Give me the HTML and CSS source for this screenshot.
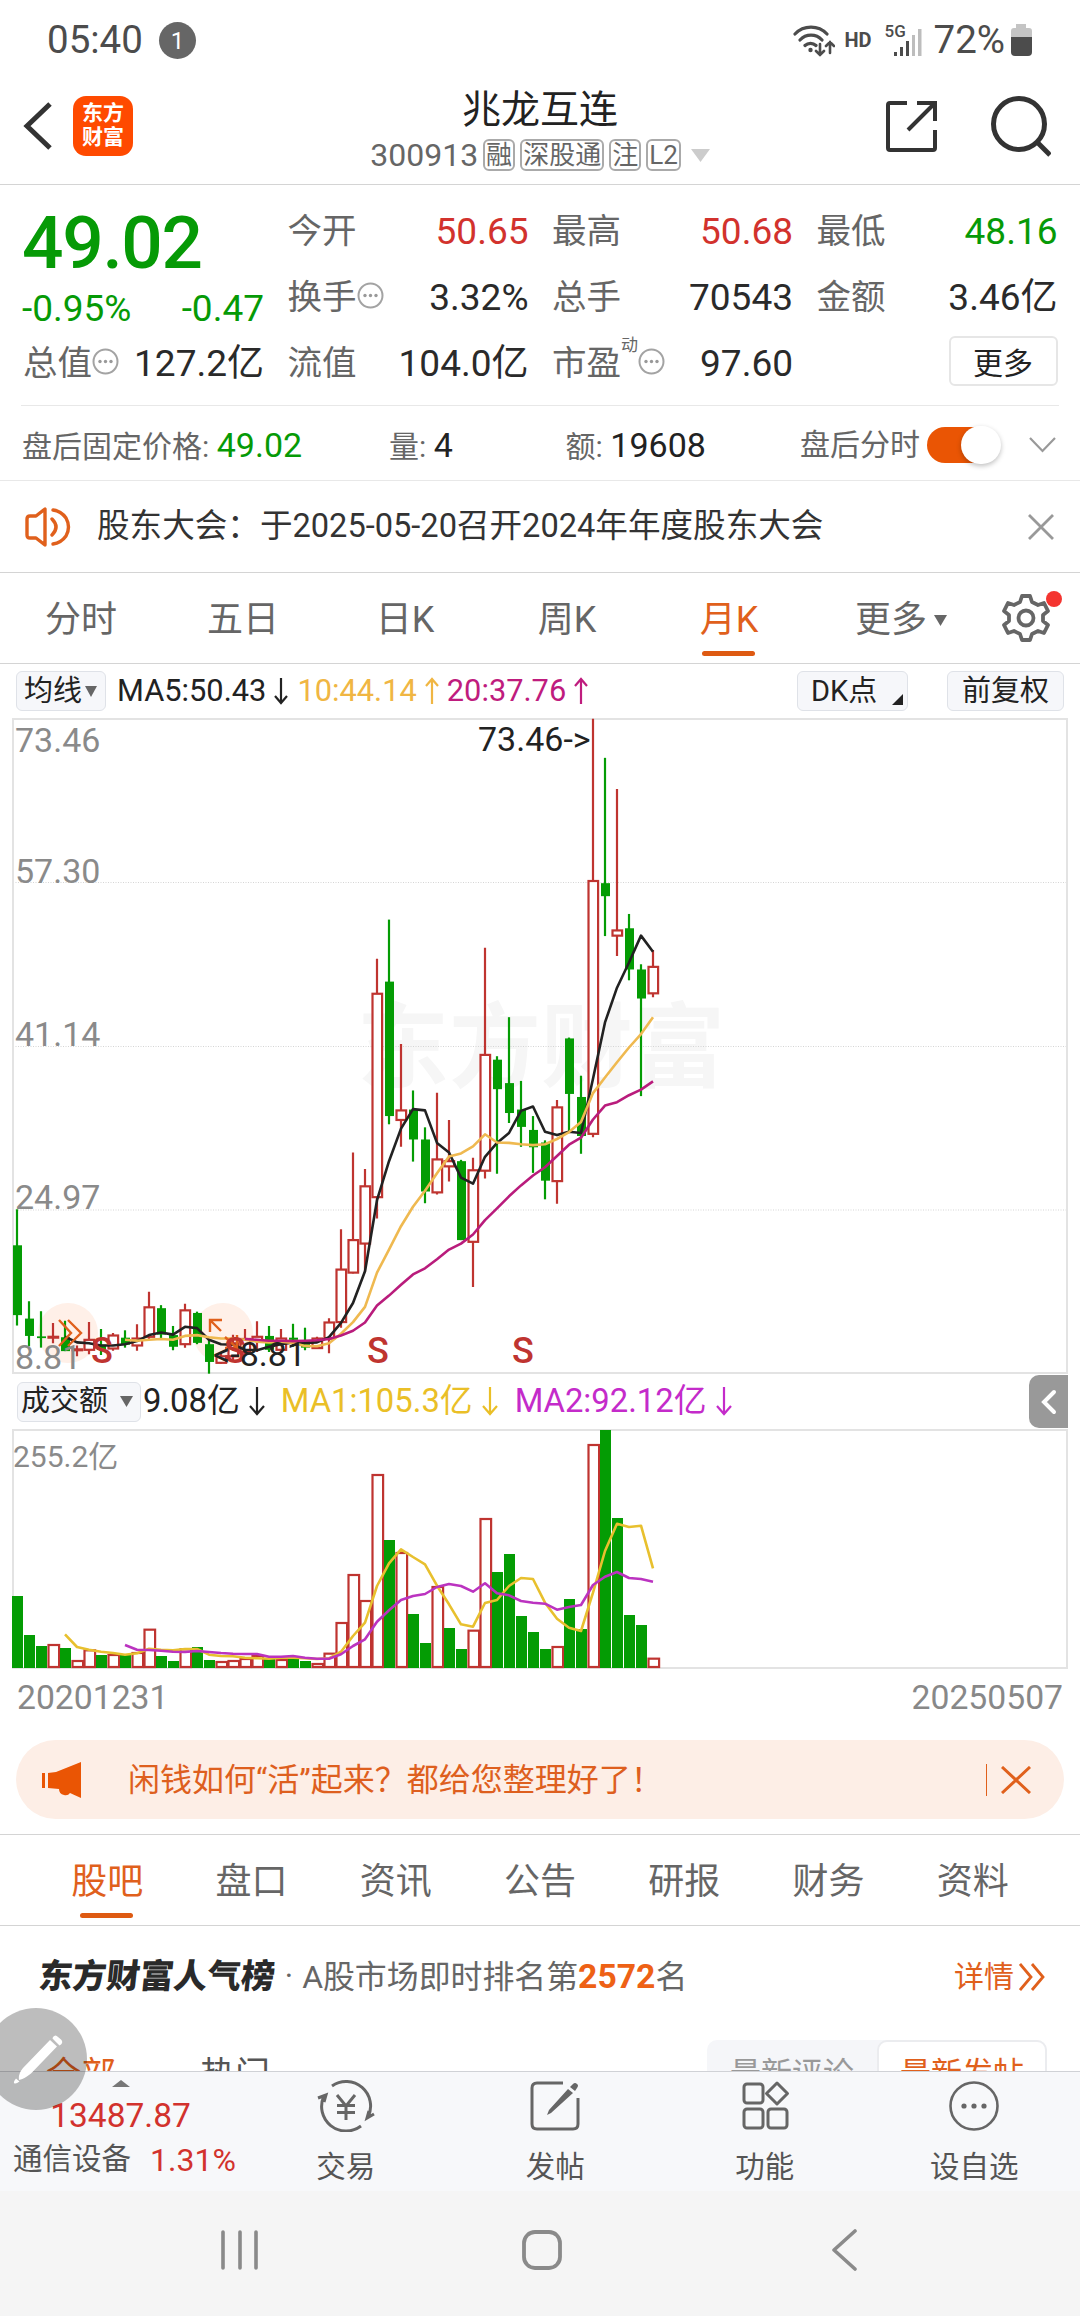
FILE: index.html
```
<!DOCTYPE html>
<html lang="zh-CN">
<head>
    <meta charset="UTF-8">
    <meta name="viewport" content="width=device-width, initial-scale=1.0">
    <title>兆龙互连 300913</title>
    <link rel="stylesheet" href="styles.css">
</head>
<body>
    <div class="status-bar">
        <span class="clock">05:40</span>
        <span class="notice-count">1</span>
        <div class="status-right">
            <svg class="wifi" width="42" height="34" viewBox="0 0 42 34" fill="none" stroke="#4c4c4c" stroke-width="3.200" stroke-linecap="round">
                <path d="M2 11a22 22 0 0 1 32 0M7 17a15 15 0 0 1 22 0M12 22.500a8 8 0 0 1 11 0"/>
                <circle cx="17.500" cy="27" r="2.200" fill="#4c4c4c" stroke="none"/>
                <path stroke-width="2.600" d="M27 21v11M23 28l4 4 4-4M37 30V19M33 23l4-4 4 4"/>
            </svg>
            <span class="hd">HD</span>
            <div class="signal">
                <svg width="37" height="34" viewBox="0 0 37 34">
                    <path fill="#4c4c4c" d="M9 29h3v4H9zM15 24h3v9h-3zM21 18h3v15h-3z"/>
                    <path fill="#bdbdbd" d="M27 12h3v21h-3zM33 6h3.500v27H33z"/>
                </svg>
                <span class="signal-type">5G</span>
            </div>
            <span class="battery-text">72%</span>
            <svg width="23" height="34" viewBox="0 0 23 34">
                <path fill="#c4c4c4" d="M6 1h10v4h3q3 0 3 3v8H1V8q0-3 3-3h2z"/>
                <path fill="#4c4c4c" d="M1 14h21v15q0 4-4 4H5q-4 0-4-4z"/>
            </svg>
        </div>
    </div>

    <header class="header">
        <div class="header-left">
            <svg width="32" height="50" viewBox="0 0 32 50" fill="none" stroke="#333" stroke-width="5"><path d="M28 3L5 25l23 22"/></svg>
            <div class="logo"><span>东方</span><span>财富</span></div>
        </div>
        <div class="header-title">
            <h1>兆龙互连</h1>
            <div class="stock-code">
                <span class="code">300913</span>
                <span class="tag">融</span>
                <span class="tag">深股通</span>
                <span class="tag">注</span>
                <span class="tag">L2</span>
                <svg width="19" height="13" viewBox="0 0 19 13"><path fill="#ccc" d="M0 0h19L9.500 13z"/></svg>
            </div>
        </div>
        <div class="header-right">
            <svg width="52" height="52" viewBox="0 0 52 52" fill="none" stroke="#333" stroke-width="4">
                <path d="M21 3H4q-2 0-2 2v43q0 2 2 2h43q2 0 2-2V30M31 3h18v18M49 3L22 30"/>
            </svg>
            <svg width="62" height="62" viewBox="0 0 62 62" fill="none" stroke="#333" stroke-width="5">
                <circle cx="30" cy="29" r="25.500"/><path d="M48 47l13 13"/>
            </svg>
        </div>
    </header>

    <section class="quote">
        <div class="quote-grid">
            <div class="price-block">
                <div class="price">49.02</div>
                <div class="change"><span>-0.95%</span><span>-0.47</span></div>
            </div>
            <div class="cell"><span>今开</span><b class="up">50.65</b></div>
            <div class="cell"><span>最高</span><b class="up">50.68</b></div>
            <div class="cell"><span>最低</span><b class="down">48.16</b></div>
            <div class="cell"><span>换手</span><svg class="dots" viewBox="0 0 27 27"><use href="#dots"/></svg><b>3.32%</b></div>
            <div class="cell"><span>总手</span><b>70543</b></div>
            <div class="cell"><span>金额</span><b>3.46亿</b></div>
            <div class="cell"><span>总值</span><svg class="dots" viewBox="0 0 27 27"><use href="#dots"/></svg><b>127.2亿</b></div>
            <div class="cell"><span>流值</span><b>104.0亿</b></div>
            <div class="cell"><span>市盈</span><sup>动</sup><svg class="dots" viewBox="0 0 27 27"><use href="#dots"/></svg><b>97.60</b></div>
            <div class="cell"><button class="more-btn">更多</button></div>
        </div>
        <div class="after-hours">
            <div class="ah-price">盘后固定价格: <b class="down">49.02</b></div>
            <div class="ah-volume">量: <b>4</b></div>
            <div class="ah-amount">额: <b>19608</b></div>
            <div class="ah-switch">
                <span>盘后分时</span>
                <div class="toggle"><div class="knob"></div></div>
                <svg width="27" height="18" viewBox="0 0 27 18" fill="none" stroke="#999" stroke-width="2.200"><path d="M1 2l12.500 13L26 2"/></svg>
            </div>
        </div>
    </section>

    <section class="announce">
        <svg width="46" height="42" viewBox="0 0 46 42" fill="none" stroke="#e0601c" stroke-width="3.400" stroke-linejoin="round" stroke-linecap="round">
            <path d="M20 3v36l-9-7H5q-3 0-3-3V13q0-3 3-3h6zM27 13q8 8 0 16M28 4q8 1 13 8 5 9 0 18-5 7-13 8"/>
        </svg>
        <p>股东大会：于2025-05-20召开2024年年度股东大会</p>
        <svg width="26" height="26" viewBox="0 0 26 26" stroke="#999" stroke-width="2.800"><path d="M1 1l24 24M25 1L1 25"/></svg>
    </section>

    <nav class="period-tabs">
        <span>分时</span>
        <span>五日</span>
        <span>日K</span>
        <span>周K</span>
        <span class="active">月K</span>
        <span class="more">更多<svg width="13" height="11" viewBox="0 0 13 11"><path fill="#666" d="M0 0h13L6.500 11z"/></svg></span>
        <div class="settings">
            <svg width="48" height="48" viewBox="0 0 48 48" fill="none" stroke="#666" stroke-width="3.800" stroke-linejoin="round">
                <path d="M20 2h8l2 6 6 3 6-2 4 8-5 4v6l5 4-4 8-6-2-6 3-2 6h-8l-2-6-6-3-6 2-4-8 5-4v-6l-5-4 4-8 6 2 6-3z"/>
                <circle cx="24" cy="24" r="7.500"/>
            </svg>
            <i class="red-dot"></i>
        </div>
    </nav>

    <section class="chart-section">
        <div class="indicator-row">
            <span class="chip ma-chip">均线<svg width="12" height="11" viewBox="0 0 12 11"><path fill="#666" d="M0 0h12L6 11z"/></svg></span>
            <span class="ma5">MA5:50.43<svg class="arrow" viewBox="0 0 14 28"><path d="M7 1v25M1 19l6 7 6-7"/></svg></span>
            <span class="ma10">10:44.14<svg class="arrow" viewBox="0 0 14 28"><path d="M7 27V2M1 9l6-7 6 7"/></svg></span>
            <span class="ma20">20:37.76<svg class="arrow" viewBox="0 0 14 28"><path d="M7 27V2M1 9l6-7 6 7"/></svg></span>
            <span class="chip dk-chip">DK点<svg width="11" height="11" viewBox="0 0 11 11"><path fill="#222" d="M11 0v11H0z"/></svg></span>
            <span class="chip fq-chip">前复权</span>
        </div>
        <svg id="priceChart" class="price-chart" width="1056" height="656" viewBox="0 0 1056 656"></svg>

        <div class="volume-row">
            <span class="chip vol-chip">成交额<svg width="13" height="11" viewBox="0 0 13 11"><path fill="#666" d="M0 0h13L6.500 11z"/></svg></span>
            <span class="vol">9.08亿<svg class="arrow" viewBox="0 0 16 30"><path d="M8 1v27M1 20l7 8 7-8"/></svg></span>
            <span class="vol-ma1">MA1:105.3亿<svg class="arrow" viewBox="0 0 16 30"><path d="M8 1v27M1 20l7 8 7-8"/></svg></span>
            <span class="vol-ma2">MA2:92.12亿<svg class="arrow" viewBox="0 0 16 30"><path d="M8 1v27M1 20l7 8 7-8"/></svg></span>
            <span class="collapse"><svg width="16" height="26" viewBox="0 0 16 26" fill="none" stroke="#fff" stroke-width="4" stroke-linecap="round"><path d="M13 3L3 13l10 10"/></svg></span>
        </div>
        <svg id="volumeChart" class="volume-chart" width="1056" height="240" viewBox="0 0 1056 240"></svg>
        <div class="date-row"><span>20201231</span><span>20250507</span></div>
    </section>

    <div class="promo">
        <svg width="40" height="36" viewBox="0 0 40 36" fill="#ea5504">
            <path d="M0 11h3v15H0zM6 11l8-1L39 0v36l-11-5q-2 3-6 2-5-1-5-6l-11-1z"/>
        </svg>
        <p>闲钱如何“活”起来？都给您整理好了！</p>
        <div class="promo-close">
            <svg width="30" height="28" viewBox="0 0 30 28" stroke="#e0601c" stroke-width="3"><path d="M1 1l28 26M29 1L1 27"/></svg>
        </div>
    </div>

    <nav class="info-tabs">
        <span class="active">股吧</span>
        <span>盘口</span>
        <span>资讯</span>
        <span>公告</span>
        <span>研报</span>
        <span>财务</span>
        <span>资料</span>
    </nav>

    <section class="forum">
        <div class="rank-row">
            <span class="rank-logo">东方财富人气榜</span>
            <span class="rank-dot">·</span>
            <span class="rank-text">A股市场即时排名第<b>2572</b>名</span>
            <span class="rank-more">详情<svg width="26" height="28" viewBox="0 0 26 28" fill="none" stroke="#e0601c" stroke-width="2.800"><path d="M1 1l11 13L1 27M13 1l11 13-11 13"/></svg></span>
        </div>
        <div class="post-tabs">
            <span class="active">全部</span>
            <span>热门</span>
            <div class="sort-switch">
                <span>最新评论</span>
                <span class="active">最新发帖</span>
            </div>
        </div>
    </section>

    <footer class="bottom-bar">
        <div class="index-box">
            <svg width="18" height="7" viewBox="0 0 18 7"><path fill="#777" d="M9 0l9 7H0z"/></svg>
            <div class="index-value">13487.87</div>
            <div class="index-name"><span>通信设备</span><b>1.31%</b></div>
        </div>
        <div class="action">
            <svg width="58" height="52" viewBox="0 0 58 52" fill="none" stroke="#666" stroke-width="3">
                <path d="M15 6A24.500 24.500 0 0 1 51 37M44 46A24.500 24.500 0 0 1 7 16M1 18l8-3-2 7M57 34l-7 4 2-7"/>
                <path d="M20 15l9 11 9-11M29 25v15M20 25.500h18M20 32.500h18"/>
            </svg>
            <span>交易</span>
        </div>
        <div class="action">
            <svg width="52" height="52" viewBox="0 0 52 52" fill="none" stroke="#666" stroke-width="3">
                <path d="M34 3H8q-5 0-5 5v36q0 5 5 5h36q5 0 5-5V18"/>
                <path fill="#666" stroke="none" d="M39 9l5 4-22 20-4 2 2-5zM44 4q2-2 4 0 2 1 0 4l-2 3-5-4z"/>
            </svg>
            <span>发帖</span>
        </div>
        <div class="action">
            <svg width="50" height="52" viewBox="0 0 50 52" fill="none" stroke="#666" stroke-width="3" stroke-linejoin="round">
                <rect x="4" y="4" width="19" height="19" rx="3"/><path d="M37 3l10.500 10.500L37 24 26.500 13.500z"/>
                <rect x="4" y="29" width="19" height="19" rx="3"/><rect x="28" y="29" width="19" height="19" rx="3"/>
            </svg>
            <span>功能</span>
        </div>
        <div class="action">
            <svg width="52" height="52" viewBox="0 0 52 52" fill="none" stroke="#666" stroke-width="2.600">
                <circle cx="26" cy="26" r="23.500"/>
                <g fill="#666" stroke="none"><circle cx="16" cy="26" r="2.600"/><circle cx="26" cy="26" r="2.600"/><circle cx="36" cy="26" r="2.600"/></g>
            </svg>
            <span>设自选</span>
        </div>
    </footer>

    <div class="system-nav">
        <svg width="42" height="42" viewBox="0 0 42 42" stroke="#8a8a8a" stroke-width="3.600" stroke-linecap="round"><path d="M4 3v36M21 3v36M37 3v36"/></svg>
        <svg width="42" height="42" viewBox="0 0 42 42" fill="none" stroke="#8a8a8a" stroke-width="3.800"><rect x="3" y="3" width="36" height="36" rx="11"/></svg>
        <svg width="42" height="42" viewBox="0 0 42 42" fill="none" stroke="#8a8a8a" stroke-width="3.600" stroke-linecap="round" stroke-linejoin="round"><path d="M32 2L11 21l21 19"/></svg>
    </div>

    <!-- 悬浮笔按钮 -->
    <div class="float-pen">
        <svg width="50" height="50" viewBox="0 0 50 50" fill="#fff"><path d="M37 6l7 6.500-26 27Q11 45 6 46q-1-6 4-12zM40 3q2.500-3 5 0l3 2.500q2.500 2.500 0 5l-1.500 1-7-7zM3 44.500l3.500 3q-4 3-5.500 1.500Q.5 47.500 3 44.500z"/></svg>
    </div>

    <svg width="0" height="0">
        <defs>
            <g id="dots">
                <circle cx="13.500" cy="13.500" r="12" fill="none" stroke="#a3a3a3" stroke-width="2"/>
                <g fill="#999"><circle cx="8" cy="13.500" r="1.700"/><circle cx="13.500" cy="13.500" r="1.700"/><circle cx="19" cy="13.500" r="1.700"/></g>
            </g>
        </defs>
    </svg>

    <script src="script.js"></script>
</body>
</html>
```
FILE: styles.css
```
* {
    box-sizing: border-box;
    margin: 0;
    padding: 0;
}

body {
    width: 1080px;
    height: 2316px;
    overflow: hidden;
    position: relative;
    background: #fff;
    color: #222;
    font-family: Roboto, "Noto Sans CJK SC", sans-serif;
    line-height: 1;
    white-space: nowrap;
}

svg {
    display: block;
    flex-shrink: 0;
}

b {
    font-weight: 400;
}

.up { color: #d2322d !important; }
.down { color: #069a06 !important; }

/* 状态栏 */
.status-bar {
    height: 78px;
    padding: 2px 47px 0 47px;
    display: flex;
    align-items: center;
    color: #4c4c4c;
    font-size: 38.5px;
}

.notice-count {
    width: 37px;
    height: 37px;
    margin-left: 16px;
    border-radius: 50%;
    background: #666;
    color: #fff;
    font-size: 24px;
    line-height: 38px;
    text-align: center;
}

.status-right {
    margin-left: auto;
    display: flex;
    align-items: center;
}

.hd {
    margin-left: 9px;
    font-size: 20px;
    font-weight: 700;
}

.signal {
    position: relative;
    margin: 0 12px 0 13px;
}

.signal-type {
    position: absolute;
    left: 0;
    top: 0;
    font-size: 17px;
    font-weight: 500;
}

.battery-text {
    margin-right: 5px;
}

/* 标题栏 */
.header {
    height: 107px;
    border-bottom: 1px solid #d4d4d4;
    display: grid;
    grid-template-columns: 300px 1fr 300px;
}

.header-left {
    display: flex;
    align-items: center;
    padding: 0 0 11px 22px;
}

.logo {
    width: 60px;
    height: 60px;
    margin-left: 19px;
    border-radius: 13px;
    background: #ff4a00;
    color: #fff;
    display: flex;
    flex-direction: column;
    align-items: center;
    justify-content: center;
    gap: 3px;
    font-size: 21px;
    font-weight: 700;
}

.header-title {
    display: flex;
    flex-direction: column;
    align-items: center;
    padding-top: 13px;
}

.header-title h1 {
    font-size: 39px;
    font-weight: 400;
    color: #222;
}

.stock-code {
    display: flex;
    align-items: center;
    gap: 5px;
    margin-top: 9px;
    color: #666;
}

.code {
    font-size: 32px;
}

.tag {
    height: 32px;
    padding: 0 1px;
    border: 2px solid #aaa;
    border-radius: 6px;
    font-size: 26px;
    line-height: 28px;
}

.stock-code svg {
    margin-left: 5px;
}

.header-right {
    display: flex;
    align-items: center;
    justify-content: flex-end;
    gap: 51px;
    padding: 0 29px 11px 0;
}

/* 行情数据 */
.quote {
    height: 296px;
    border-bottom: 1px solid #e8e8e8;
}

.quote-grid {
    height: 221px;
    margin: 0 21px;
    padding: 13px 2px 0;
    display: grid;
    grid-template-columns: repeat(4, 241px);
    grid-template-rows: repeat(3, 66px);
    column-gap: 23.5px;
    border-bottom: 1px solid #e8e8e8;
}

.price-block {
    grid-row: span 2;
    margin-left: -1px;
}

.price {
    margin-top: 9px;
    color: #069a06;
    font-size: 73px;
    font-weight: 500;
    letter-spacing: -1.3px;
}

.change {
    display: flex;
    justify-content: space-between;
    margin-top: 10px;
    color: #069a06;
    font-size: 37px;
}

.cell {
    display: flex;
    align-items: center;
    padding-top: 1px;
    color: #666;
    font-size: 34.5px;
}

.cell b {
    margin-left: auto;
    color: #2a2a2a;
    font-size: 37px;
}

.cell sup {
    align-self: flex-start;
    margin-top: 6px;
    font-size: 17px;
}

.dots {
    width: 27px;
    height: 27px;
    margin-top: -5px;
}

.more-btn {
    width: 109px;
    height: 50px;
    margin: -5px 0 0 auto;
    border: 2px solid #e6e6e6;
    border-radius: 6px;
    background: #fff;
    color: #222;
    font-family: inherit;
    font-size: 30px;
}

.after-hours {
    height: 74px;
    padding: 3px 24px 0 22px;
    display: flex;
    align-items: center;
    color: #666;
    font-size: 30px;
}

.after-hours b {
    color: #222;
    font-size: 34px;
}

.ah-price { width: 368px; }
.ah-volume { width: 177px; }
.ah-amount { width: 235px; }

.ah-switch {
    display: flex;
    align-items: center;
}

.toggle {
    width: 72px;
    height: 36px;
    margin: 0 30px 0 7px;
    border-radius: 18px;
    background: #ea5504;
    display: flex;
    align-items: center;
    justify-content: flex-end;
}

.knob {
    width: 40px;
    height: 38px;
    margin-right: -2px;
    border-radius: 20px;
    background: #fff;
    box-shadow: 0 2px 5px rgba(0, 0, 0, 0.25);
}

/* 公告 */
.announce {
    height: 92px;
    padding: 0 26px 0 25px;
    border-bottom: 1px solid #d4d4d4;
    display: flex;
    align-items: center;
}

.announce p {
    flex: 1;
    margin-left: 26px;
    color: #333;
    font-size: 32.6px;
}

/* 周期切换 */
.period-tabs {
    height: 91px;
    border-bottom: 1px solid #d4d4d4;
    display: grid;
    grid-template-columns: repeat(6, 162px) 108px;
    color: #666;
    font-size: 36px;
}

.period-tabs > span,
.info-tabs span {
    display: flex;
    align-items: center;
    justify-content: center;
    position: relative;
    padding-top: 4px;
}

.period-tabs .more {
    gap: 7px;
    padding-left: 20px;
}

.period-tabs .active,
.info-tabs .active {
    color: #e0601c;
}

.period-tabs .active::after,
.info-tabs .active::after {
    content: "";
    position: absolute;
    left: 50%;
    bottom: 7px;
    width: 53px;
    height: 5px;
    margin-left: -27px;
    border-radius: 3px;
    background: #de5a12;
}

.settings {
    position: relative;
    display: flex;
    align-items: center;
    justify-content: center;
}

.red-dot {
    position: absolute;
    right: 18px;
    top: 18px;
    width: 16px;
    height: 16px;
    border-radius: 50%;
    background: #f43530;
}

/* 图表 */
.chart-section {
    height: 1060px;
}

.indicator-row,
.volume-row {
    display: flex;
    align-items: center;
}

.indicator-row {
    height: 54px;
    padding: 0 16px;
    font-size: 30.8px;
}

.indicator-row > span,
.volume-row > span {
    display: flex;
    align-items: center;
}

.chip {
    height: 40px;
    border: 1px solid #dfe2e8;
    border-radius: 6px;
    background: #f6f7fa;
    color: #222;
    font-size: 29px;
}

.ma-chip {
    width: 90px;
    gap: 3px;
    padding-left: 7px;
}

.arrow {
    width: 14px;
    height: 28px;
    margin-left: 8px;
    fill: none;
    stroke: currentColor;
    stroke-width: 2.2;
}

.ma5 { margin-left: 11px; }
.ma10 { margin-left: 9px; color: #f0b643; }
.ma20 { margin-left: 8px; color: #bf1c7e; }

.dk-chip {
    width: 111px;
    margin-left: auto;
    justify-content: space-between;
    padding: 0 4px 0 13px;
}

.dk-chip svg {
    align-self: flex-end;
    margin-bottom: 5px;
}

.fq-chip {
    width: 117px;
    margin-left: 39px;
    justify-content: center;
}

.price-chart,
.volume-chart {
    margin-left: 12px;
}

.volume-row {
    height: 55px;
    padding: 0 12px 0 17px;
    font-size: 32.8px;
}

.vol-chip {
    width: 124px;
    justify-content: space-between;
    padding: 0 7px 0 3px;
}

.volume-row .arrow {
    width: 16px;
    height: 30px;
    margin-left: 9px;
}

.vol { margin-left: 2px; }
.vol-ma1 { margin-left: 16px; color: #eabf27; }
.vol-ma2 { margin-left: 17px; color: #c42bca; }

.collapse {
    width: 39px;
    height: 53px;
    margin-left: auto;
    border-radius: 10px 0 0 10px;
    background: #999;
    justify-content: center;
}

.date-row {
    padding: 12px 17px;
    display: flex;
    justify-content: space-between;
    color: #888;
    font-size: 33.7px;
}

.axis-label {
    fill: #8a8a8a;
    font-size: 34px;
}

.axis-label.small {
    font-size: 30px;
}

.mark-label {
    fill: #222;
    font-size: 34px;
}

.s-mark {
    fill: #bf3430;
    font-size: 36px;
    font-weight: 500;
    text-anchor: middle;
}

.watermark {
    fill: #f6f6f6;
    font-size: 92px;
    font-weight: 700;
}

/* 活动提示 */
.promo {
    height: 79px;
    margin: 16px 16px 15px;
    padding: 0 33px 0 26px;
    border-radius: 40px;
    background: #fdeee6;
    color: #de5f1e;
    display: flex;
    align-items: center;
}

.promo p {
    margin-left: 46px;
    font-size: 32px;
}

.promo-close {
    margin-left: auto;
    padding: 2px 0 2px 14px;
    border-left: 1px solid #e0601c;
}

.info-tabs {
    height: 92px;
    padding: 0 35px;
    border-top: 1px solid #d4d4d4;
    border-bottom: 1px solid #d4d4d4;
    display: grid;
    grid-template-columns: repeat(7, 1fr);
    color: #666;
    font-size: 36px;
}

.forum {
    height: 145px;
    overflow: hidden;
}

.rank-row {
    height: 100px;
    padding: 1px 35px 0 39px;
    display: flex;
    align-items: center;
    color: #666;
    font-size: 31.9px;
}

.rank-logo {
    color: #2a2a2a;
    font-size: 33.7px;
    font-weight: 900;
    transform: skewX(-6deg);
}

.rank-dot {
    margin: 0 9px 0 10px;
}

.rank-text b {
    color: #ee6115;
    font-size: 33.7px;
    font-weight: 700;
}

.rank-more {
    margin-left: auto;
    display: flex;
    align-items: center;
    gap: 5px;
    color: #e0601c;
    font-size: 30px;
}

.post-tabs {
    height: 64px;
    margin: 14px 33px 0 46px;
    display: flex;
    align-items: center;
    color: #555;
    font-size: 35px;
}

.post-tabs > span {
    width: 154px;
    padding-top: 6px;
}

.post-tabs .active {
    color: #e0601c;
}

.sort-switch {
    width: 340px;
    height: 64px;
    margin-left: auto;
    border-radius: 10px;
    background: #f5f6f9;
    display: flex;
    color: #999;
    font-size: 31px;
}

.sort-switch span {
    width: 170px;
    line-height: 67px;
    text-align: center;
}

.sort-switch .active {
    border: 2px solid #ebecef;
    border-radius: 10px;
    background: #fff;
    line-height: 63px;
}

/* 底部操作栏 */
.bottom-bar {
    height: 120px;
    border-top: 1px solid #d0d2d6;
    background: #f7f8fa;
    display: grid;
    grid-template-columns: 241px repeat(4, 209.5px);
    color: #555;
    font-size: 29.5px;
}

.index-box {
    display: flex;
    flex-direction: column;
    align-items: center;
    padding-top: 8px;
}

.index-value {
    margin-top: 12px;
    color: #d2322d;
    font-size: 33.5px;
}

.index-name {
    display: flex;
    align-items: center;
    gap: 19px;
    margin: 11px 0 0 8px;
}

.index-name b {
    color: #d2322d;
    font-size: 32px;
}

.action {
    display: flex;
    flex-direction: column;
    align-items: center;
    gap: 21px;
    padding-top: 8px;
}

.system-nav {
    height: 126px;
    background: #f5f5f5;
    padding: 0 89px 8px;
    display: grid;
    grid-template-columns: repeat(3, 302px);
    align-items: center;
    justify-items: center;
}

.float-pen {
    position: absolute;
    left: -15px;
    top: 2008px;
    width: 102px;
    height: 102px;
    border-radius: 50%;
    background: rgba(0, 0, 0, 0.26);
    display: flex;
    align-items: center;
    justify-content: center;
}

.float-pen svg {
    margin-left: 4px;
}
```
FILE: script.js
```
// 月K数据: [最高, 实体上沿, 实体下沿, 最低, 涨(1)/跌(0)]，坐标 20 ~ 1528
const candles = [
    [1151, 1234, 1395, 1419, 0], [1363, 1403, 1443, 1467, 0], [1386, 1444, 1448, 1470, 0], [1413, 1445, 1447, 1460, 1],
    [1408, 1446, 1478, 1478, 0], [1465, 1474, 1476, 1490, 1], [1411, 1452, 1475, 1485, 1], [1427, 1463, 1475, 1487, 0],
    [1436, 1442, 1472, 1477, 1], [1430, 1447, 1463, 1470, 0], [1416, 1449, 1465, 1477, 1], [1341, 1377, 1445, 1450, 1],
    [1372, 1379, 1440, 1448, 0], [1420, 1441, 1468, 1476, 0], [1369, 1384, 1462, 1470, 1], [1387, 1390, 1459, 1462, 0],
    [1450, 1462, 1503, 1530, 0], [1480, 1490, 1505, 1507, 1], [1440, 1460, 1490, 1500, 1], [1427, 1450, 1480, 1485, 1],
    [1409, 1445, 1453, 1480, 1], [1420, 1443, 1475, 1480, 0], [1427, 1449, 1475, 1483, 1], [1415, 1447, 1452, 1468, 0],
    [1424, 1455, 1470, 1476, 0], [1445, 1449, 1471, 1473, 1], [1402, 1412, 1449, 1483, 1], [1197, 1290, 1411, 1424, 1],
    [1020, 1222, 1297, 1299, 1], [1058, 1098, 1230, 1295, 1], [573, 654, 1123, 1172, 1], [483, 626, 936, 955, 0],
    [770, 923, 945, 1007, 1], [877, 921, 990, 1041, 0], [962, 990, 1110, 1137, 0], [882, 1036, 1112, 1117, 1],
    [945, 1040, 1052, 1087, 1], [1037, 1040, 1222, 1222, 0], [1032, 1061, 1226, 1330, 1], [548, 795, 1062, 1080, 1],
    [798, 806, 874, 1069, 0], [708, 860, 929, 952, 0], [855, 921, 961, 1007, 0], [936, 968, 1008, 1067, 0],
    [992, 997, 1085, 1128, 0], [899, 916, 1086, 1138, 1], [755, 757, 885, 975, 0], [843, 892, 982, 1023, 0],
    [20, 394, 977, 985, 1], [110, 399, 429, 521, 0], [182, 508, 520, 567, 1], [470, 503, 598, 623, 0],
    [586, 598, 665, 890, 0], [553, 592, 653, 662, 1]
];

const ma5 = [1445, 1458, 1460, 1465, 1465, 1462, 1455, 1441, 1435, 1440, 1422, 1425, 1452, 1462, 1463, 1475, 1476, 1468, 1462,
    1458, 1459, 1458, 1446, 1413, 1367, 1294, 1130, 1040, 965, 920, 923, 998, 1020, 1078, 1092, 1030, 998, 975, 924, 914, 972,
    980, 972, 975, 850, 720, 640, 582, 520, 557];
const ma10 = [1452, 1454, 1452, 1450, 1452, 1443, 1441, 1446, 1449, 1449, 1452, 1456, 1458, 1456, 1459, 1466, 1467, 1460, 1438,
    1411, 1376, 1297, 1244, 1190, 1145, 1108, 1068, 1029, 1022, 1006, 978, 997, 998, 1001, 1003, 1001, 989, 973, 950, 883, 847,
    812, 778, 747, 708];
const ma20 = [1450, 1452, 1454, 1454, 1455, 1454, 1453, 1450, 1442, 1431, 1412, 1373, 1350, 1325, 1301, 1287, 1266, 1244, 1230,
    1209, 1176, 1149, 1121, 1096, 1073, 1054, 1028, 1002, 986, 944, 912, 904, 888, 875, 856];

// 成交额柱顶坐标 177 ~ 893
const volumes = [675, 792, 825, 822, 831, 870, 838, 852, 852, 850, 846, 776, 855, 870, 835, 828, 867, 873, 870, 864, 855, 864,
    867, 860, 870, 879, 848, 756, 612, 690, 312, 507, 546, 729, 816, 648, 771, 834, 779, 444, 603, 549, 735, 783, 834, 828, 684,
    774, 222, 177, 441, 732, 762, 863];
const volMa1 = [790, 828, 836, 842, 846, 851, 847, 833, 836, 838, 834, 834, 851, 855, 856, 860, 862, 863, 860, 860, 862, 864,
    862, 842, 795, 755, 645, 577, 535, 558, 580, 644, 700, 760, 767, 696, 687, 645, 621, 624, 695, 743, 770, 780, 665, 540, 458,
    468, 464, 592];
const volMa2 = [822, 836, 837, 839, 842, 843, 840, 843, 846, 848, 849, 849, 857, 857, 855, 860, 863, 863, 850, 825, 805, 752,
    718, 687, 675, 669, 648, 639, 645, 662, 637, 667, 673, 690, 695, 698, 716, 708, 702, 642, 617, 603, 621, 624, 632];

const RED = '#bf3430';
const GREEN = '#049c04';
const x = i => 5 + 12 * i;
const priceY = v => 0.8 + (v - 20) * 654 / 1508;
const volY = v => 1 + (v - 177) / 3;

function maLine(values, toY, color) {
    const start = candles.length - values.length;
    const points = values.map((v, i) => `${x(start + i)},${toY(v).toFixed(1)}`).join(' ');
    return `<polyline points="${points}" fill="none" stroke="${color}" stroke-width="2.6" stroke-linejoin="round"/>`;
}

function drawPrice() {
    let s = '<text class="watermark" x="345" y="362">东方财富</text>';
    [164.5, 328.5, 492].forEach(y => {
        s += `<path d="M1 ${y}H1055" stroke="#d5d5d5" stroke-dasharray="1 1.5"/>`;
    });
    s += '<rect x="1" y="1" width="1054" height="654" fill="none" stroke="#e3e3e3" stroke-width="2"/>';
    s += '<circle cx="56" cy="615" r="30" fill="#fff0e8"/><circle cx="211" cy="615" r="30" fill="#fff0e8"/>';

    candles.forEach(([high, top, bottom, low, up], i) => {
        const cx = x(i), t = priceY(top), b = priceY(bottom);
        if (up) {
            s += `<path d="M${cx} ${priceY(high)}V${t}M${cx} ${b}V${priceY(low)}" stroke="${RED}" stroke-width="2.2"/>`;
            s += `<rect x="${cx - 4.5}" y="${t}" width="9.6" height="${b - t}" fill="#fff" stroke="${RED}" stroke-width="2.2"/>`;
        } else {
            s += `<path d="M${cx} ${priceY(high)}V${priceY(low)}" stroke="${GREEN}" stroke-width="2.2"/>`;
            s += `<rect x="${cx - 4}" y="${t}" width="9" height="${b - t}" fill="${GREEN}"/>`;
        }
    });

    [['73.46', 34], ['57.30', 165], ['41.14', 328], ['24.97', 491], ['8.81', 651]].forEach(([t, y]) => {
        s += `<text class="axis-label" x="3" y="${y}">${t}</text>`;
    });

    s += maLine(ma5, priceY, '#222') + maLine(ma10, priceY, '#efb950') + maLine(ma20, priceY, '#b91c7c');
    s += '<g fill="none" stroke="#e0601c" stroke-width="2.4">' +
        '<path d="M47 602l12 13-12 13M56 602l13 13-13 13"/>' +
        '<path d="M198 614v-12h12M198 602l11 11M213 619l12 11M225 617v13h-12"/></g>';
    [90, 223, 366, 511].forEach(sx => {
        s += `<text class="s-mark" x="${sx}" y="645">S</text>`;
    });
    s += '<text class="mark-label" x="466" y="33">73.46-&gt;</text><text class="mark-label" x="201" y="648">&lt;-8.81</text>';
    document.getElementById('priceChart').innerHTML = s;
}

function drawVolume() {
    // 成交额颜色按较上月涨跌，个别月份与K线实体颜色不同
    const downBars = [36, 50];
    let s = '<rect x="1" y="1" width="1054" height="238" fill="none" stroke="#e3e3e3" stroke-width="2"/>';
    volumes.forEach((v, i) => {
        const y = volY(v);
        if (candles[i][4] && !downBars.includes(i)) {
            s += `<rect x="${x(i) - 4.5}" y="${y}" width="10.6" height="${238 - y}" fill="#fff" stroke="${RED}" stroke-width="2.2"/>`;
        } else {
            s += `<rect x="${x(i) - 5}" y="${y}" width="11" height="${239 - y}" fill="${GREEN}"/>`;
        }
    });
    s += maLine(volMa1, volY, '#e8c02e') + maLine(volMa2, volY, '#bb33c0');
    s += '<text class="axis-label small" x="1" y="38">255.2亿</text>';
    document.getElementById('volumeChart').innerHTML = s;
}

drawPrice();
drawVolume();
```
